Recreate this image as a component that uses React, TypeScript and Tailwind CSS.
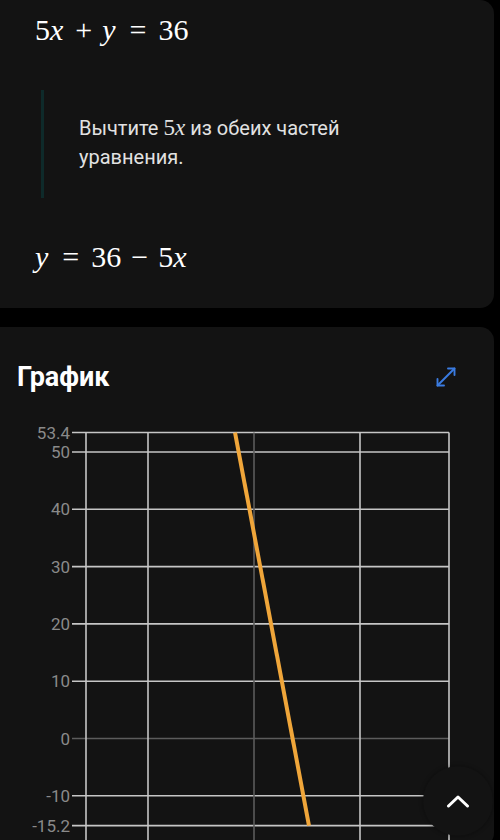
import React from 'react';

const serif = { fontFamily: '"Liberation Serif", "DejaVu Serif", serif' };

const Var: React.FC<{ children: React.ReactNode }> = ({ children }) => (
    <span className="italic pr-[2px]">{children}</span>
);

const Op: React.FC<{ children: React.ReactNode; wide?: boolean }> = ({ children, wide }) => (
    <span className={wide ? 'mx-[12px]' : 'mx-[10px]'}>{children}</span>
);

const ticks = [
    { v: 53.4, label: '53.4' },
    { v: 50, label: '50' },
    { v: 40, label: '40' },
    { v: 30, label: '30' },
    { v: 20, label: '20' },
    { v: 10, label: '10' },
    { v: 0, label: '0' },
    { v: -10, label: '-10' },
    { v: -15.2, label: '-15.2' },
];

// svg top sits at page y 417
const yOf = (v: number) => 321.5 - 5.73 * v;
const xLines = [86, 148, 254, 360, 449];

const Chart: React.FC = () => (
    <svg width="494" height="430" className="block">
        {ticks.map((t) => (
            <g key={t.label}>
                <line
                    x1={72}
                    x2={449}
                    y1={yOf(t.v)}
                    y2={yOf(t.v)}
                    stroke={t.v === 0 ? '#5c5c5c' : '#c6c6c6'}
                    strokeWidth={1.6}
                />
                <text
                    x={70}
                    y={yOf(t.v)}
                    textAnchor="end"
                    dominantBaseline="central"
                    fill="#8a8a8a"
                    fontSize={17}
                    fontFamily="Roboto, sans-serif"
                >
                    {t.label}
                </text>
            </g>
        ))}
        {xLines.map((x) => (
            <line
                key={x}
                x1={x}
                x2={x}
                y1={yOf(53.4)}
                y2={430}
                stroke={x === 254 ? '#5c5c5c' : '#c6c6c6'}
                strokeWidth={1.6}
            />
        ))}
        <line x1={235} y1={yOf(53.4)} x2={309} y2={yOf(-15.2)} stroke="#f0a63a" strokeWidth={4} />
    </svg>
);

export default function App() {
    return (
        <div className="min-h-[840px] bg-black pr-[6px]" style={{ fontFamily: 'Roboto, "Noto Sans", sans-serif' }}>
            <div className="bg-[#131313] rounded-r-[14px] pt-[10px] pb-[31px]">
                <div className="pl-[35px] h-[40px] flex items-center text-[30px] text-white leading-none" style={serif}>
                    <span>5</span>
                    <Var>x</Var>
                    <Op>+</Op>
                    <Var>y</Var>
                    <Op wide>=</Op>
                    <span>36</span>
                </div>

                <div className="mt-[40px] ml-[41px] flex h-[108px]">
                    <div className="w-[3px] bg-[#0e2a2a]" />
                    <div className="pl-[35px] pt-[23px] text-[20px] leading-[29px] text-[#e2e2e2]">
                        <div>
                            Вычтите{' '}
                            <span className="text-[23px]" style={serif}>
                                5<span className="italic">x</span>
                            </span>{' '}
                            из обеих частей
                        </div>
                        <div>уравнения.</div>
                    </div>
                </div>

                <div className="mt-[39px] pl-[35px] h-[40px] flex items-center text-[30px] text-white leading-none" style={serif}>
                    <Var>y</Var>
                    <Op wide>=</Op>
                    <span>36</span>
                    <Op>−</Op>
                    <span>5</span>
                    <Var>x</Var>
                </div>
            </div>

            <div className="mt-[19px] bg-[#131313] rounded-r-[14px] overflow-hidden">
                <div className="h-[90px] flex items-center justify-between pl-[17px] pr-[37px] pt-[10px]">
                    <span className="text-[27px] font-bold text-white">График</span>
                    <svg width="22" height="22" viewBox="0 0 22 22" fill="none" stroke="#3a7be0" strokeWidth={1.9} strokeLinecap="round" strokeLinejoin="round">
                        <path d="M2.5 19.5 19.5 2.5" />
                        <path d="M13 2.5h6.5V9" />
                        <path d="M2.5 13v6.5H9" />
                    </svg>
                </div>
                <Chart />
            </div>

            <button className="fixed right-[7px] bottom-[4px] w-[70px] h-[70px] rounded-full bg-[#131313] flex items-center justify-center shadow-[0_0_4px_rgba(0,0,0,0.4)]">
                <svg width="24" height="14" viewBox="0 0 24 14" fill="none" stroke="white" strokeWidth={3} strokeLinecap="round" strokeLinejoin="round">
                    <path d="M2.5 12 12 3l9.5 9" />
                </svg>
            </button>
        </div>
    );
}
